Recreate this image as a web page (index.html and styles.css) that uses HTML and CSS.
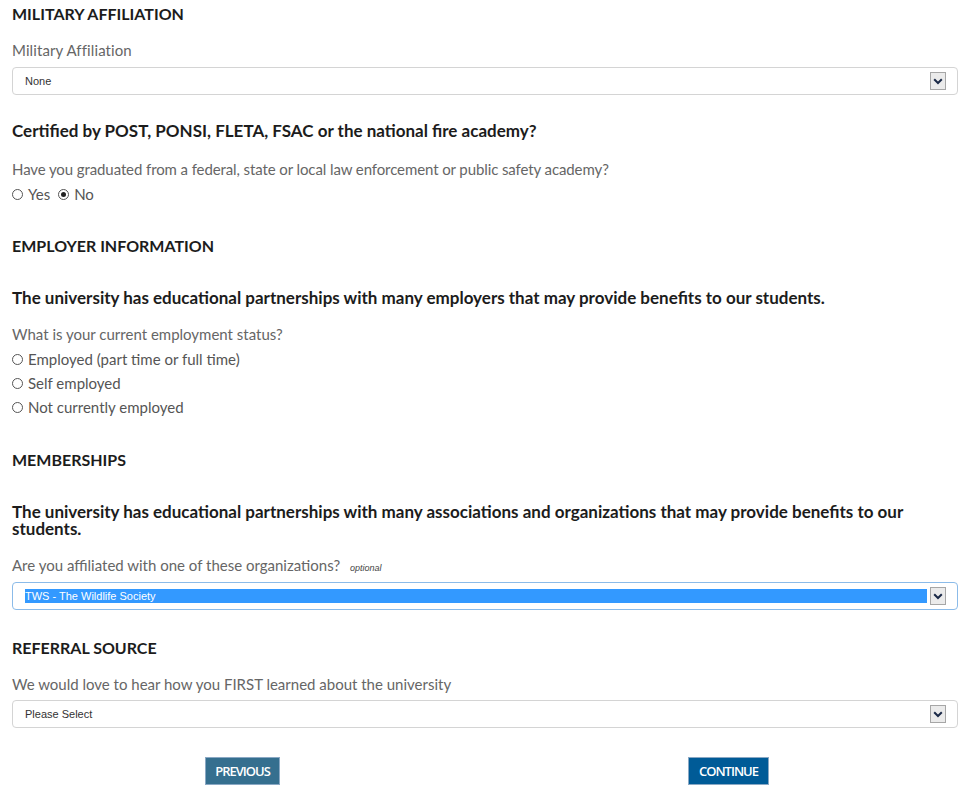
FILE: index.html
```html
<!DOCTYPE html>
<html>
<head>
<meta charset="utf-8">
<link rel="stylesheet" href="styles.css">
</head>
<body>
<form class="form">
  <h2 class="section-title t-military">MILITARY AFFILIATION</h2>
  <label class="field-label l-military">Military Affiliation</label>
  <div class="select s-military"><span class="select-value">None</span><span class="select-arrow"><svg width="10" height="7" viewBox="0 0 10 7"><path d="M1.2 1.3 L5 5 L8.8 1.3" fill="none" stroke="#1b2a48" stroke-width="2"/></svg></span></div>

  <h3 class="sub-title t-certified">Certified by POST, PONSI, FLETA, FSAC or the national fire academy?</h3>
  <p class="field-label l-grad">Have you graduated from a federal, state or local law enforcement or public safety academy?</p>
  <div class="radio-inline">
    <span class="radio-item"><span class="radio"></span>Yes</span>
    <span class="radio-item"><span class="radio checked"></span>No</span>
  </div>

  <h2 class="section-title t-employer">EMPLOYER INFORMATION</h2>
  <h3 class="sub-title t-univ1">The university has educational partnerships with many employers that may provide benefits to our students.</h3>
  <p class="field-label l-status">What is your current employment status?</p>
  <div class="radio-list">
    <div class="radio-item"><span class="radio"></span>Employed (part time or full time)</div>
    <div class="radio-item"><span class="radio"></span>Self employed</div>
    <div class="radio-item"><span class="radio"></span>Not currently employed</div>
  </div>

  <h2 class="section-title t-members">MEMBERSHIPS</h2>
  <h3 class="sub-title t-univ2">The university has educational partnerships with many associations and organizations that may provide benefits to our students.</h3>
  <p class="field-label l-affil">Are you affiliated with one of these organizations? <span class="optional">optional</span></p>
  <div class="select select-focus s-affil"><span class="select-value selected">TWS - The Wildlife Society</span><span class="select-arrow"><svg width="10" height="7" viewBox="0 0 10 7"><path d="M1.2 1.3 L5 5 L8.8 1.3" fill="none" stroke="#1b2a48" stroke-width="2"/></svg></span></div>

  <h2 class="section-title t-referral">REFERRAL SOURCE</h2>
  <p class="field-label l-ref">We would love to hear how you FIRST learned about the university</p>
  <div class="select s-ref"><span class="select-value">Please Select</span><span class="select-arrow"><svg width="10" height="7" viewBox="0 0 10 7"><path d="M1.2 1.3 L5 5 L8.8 1.3" fill="none" stroke="#1b2a48" stroke-width="2"/></svg></span></div>

  <div class="actions">
    <button type="button" class="btn btn-prev">PREVIOUS</button>
    <button type="button" class="btn btn-next">CONTINUE</button>
  </div>
</form>
</body>
</html>
```

FILE: styles.css
```css
html, body {
  margin: 0;
  padding: 0;
  background: #fff;
}
body {
  font-family: Lato, "Open Sans", sans-serif;
  color: #222;
}
.form {
  padding: 4px 17px 0 12px;
}
.section-title,
.sub-title {
  margin: 0;
  font-size: 17px;
  font-weight: 700;
  line-height: 20px;
  color: #1c1c1c;
}
.section-title {
  font-size: 16px;
}
.field-label {
  display: block;
  margin: 0;
  font-size: 15px;
  line-height: 20px;
  color: #666;
}
.l-grad { letter-spacing: -0.1px; }
.l-military { margin-top: 16px; letter-spacing: 0.1px; }
.s-military { margin-top: 7px; }
.t-certified { margin-top: 26px; }
.l-grad { margin-top: 18px; }
.radio-inline {
  margin-top: 5px;
  display: flex;
  gap: 8px;
  font-size: 15px;
  line-height: 20px;
  color: #555;
}
.t-employer { margin-top: 32px; }
.t-univ1 { margin-top: 32px; }
.l-status { margin-top: 16px; }
.radio-list {
  margin-top: 3px;
  font-size: 15px;
  line-height: 24px;
  color: #555;
}
.t-members { margin-top: 31px; }
.t-univ2 { margin-top: 33px; line-height: 17px; }
.l-affil { margin-top: 18px; }
.s-affil { margin-top: 4px; }
.t-referral { margin-top: 28px; }
.l-ref { margin-top: 16px; }
.s-ref { margin-top: 6px; }

.radio-item {
  display: flex;
  align-items: center;
}
.radio {
  width: 9px;
  height: 9px;
  border: 1px solid #555;
  border-radius: 50%;
  margin-right: 5px;
  box-sizing: content-box;
  position: relative;
  flex: none;
}
.radio.checked::after {
  content: "";
  position: absolute;
  left: 2px;
  top: 2px;
  width: 5px;
  height: 5px;
  border-radius: 50%;
  background: #222;
}

.select {
  height: 28px;
  box-sizing: border-box;
  border: 1px solid #d4d4d4;
  border-radius: 4px;
  display: flex;
  align-items: center;
  padding: 0 11px 0 12px;
  font-family: "Liberation Sans", Arial, sans-serif;
  font-size: 11px;
  color: #333;
}
.select-focus {
  border-color: #8bbbe9;
}
.select-value {
  flex: 1;
  line-height: 14px;
  height: 14px;
}
.select-value.selected {
  background: #3399ff;
  color: #fff;
  margin-right: 3px;
}
.select-arrow {
  width: 14px;
  height: 16px;
  border: 1px solid #a6a6a6;
  background: #ebebeb;
  display: flex;
  align-items: center;
  justify-content: center;
  flex: none;
}

.optional {
  font-style: italic;
  font-size: 9px;
  color: #444;
  margin-left: 6px;
  font-family: "Liberation Sans", Arial, sans-serif;
}

.actions {
  margin-top: 29px;
  display: flex;
  padding-left: 193px;
}
.btn {
  height: 28px;
  border: 1px solid #8aa8c4;
  color: #fff;
  font-family: "Open Sans", sans-serif;
  font-size: 13px;
  font-weight: 600;
  letter-spacing: -1px;
  padding: 0;
  cursor: pointer;
}
.btn-prev {
  width: 75px;
  background: #356f8f;
}
.btn-next {
  width: 81px;
  margin-left: 408px;
  background: #005b97;
}
```
